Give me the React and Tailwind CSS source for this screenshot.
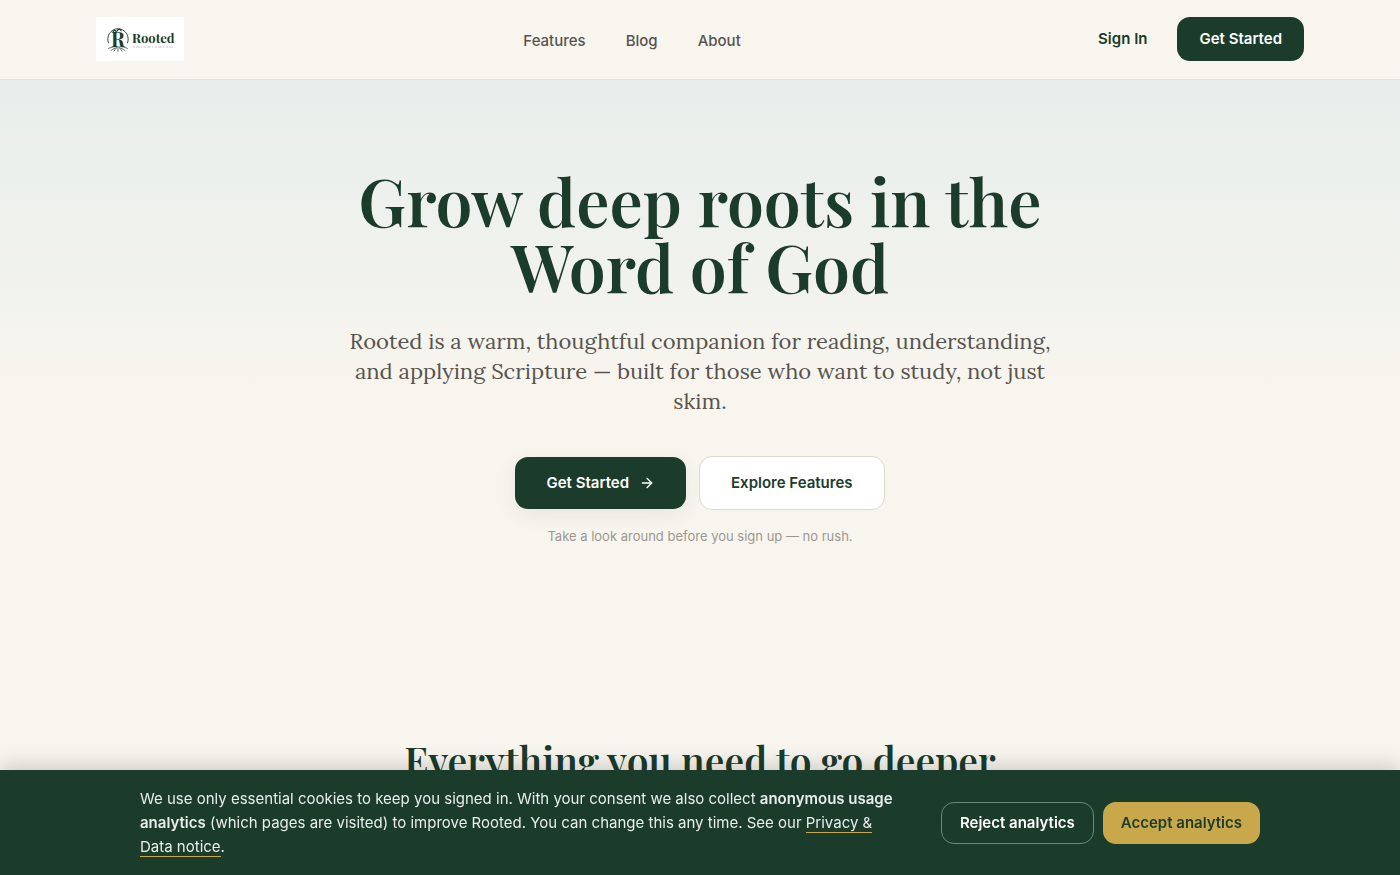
import { ArrowRight } from "lucide-react";

function Logo() {
  return (
    <a href="#home" aria-label="Rooted" className="flex h-11 w-22 items-center bg-white pl-2">
      <svg viewBox="0 0 80 44" className="h-11 w-20" aria-hidden="true">
        <g fill="none" stroke="#1b3b2b" strokeLinecap="round">
          <path d="M4.500 26A10.300 10.300 0 1 1 23.500 26" strokeWidth="0.900" />
          <path d="M14 30v4.500M13 30c-2 2-4 1.500-6 3.500M15 30c2 2 4 1.500 6 3.500M12 29.500c-3 .5-5 .5-7.500 2M16 29.500c3 .5 5 .5 7.500 2M12.500 31c-1 1-2 2-2.500 3M15.500 31c1 1 2 2 2.500 3" strokeWidth="0.700" />
          <path d="M9 15c1-2 2-2 3-.5M13 14c1-2 3-2 4-.5" strokeWidth="1.200" />
        </g>
        <text x="7" y="30" fontFamily="Playfair Display, Liberation Serif, serif" fontWeight="700" fontSize="20" fill="#1b3b2b">R</text>
        <text x="28" y="26" fontFamily="Playfair Display, Liberation Serif, serif" fontWeight="700" fontSize="13" fill="#1b3b2b">Rooted</text>
        <path d="M29 30h41" stroke="#b9b9b4" strokeWidth="0.800" strokeDasharray="2 1 4 1 1 2" />
      </svg>
    </a>
  );
}

function Header() {
  return (
    <header className="border-b border-[#e6e2da] bg-[#f8f5ee] pb-px">
      <div className="mx-auto flex h-[78px] max-w-[1208px] items-center justify-between">
        <Logo />
        <nav className="flex gap-10 pt-1 text-[15px] font-medium text-[#57534e]">
          <a href="#features">Features</a>
          <a href="#blog">Blog</a>
          <a href="#about">About</a>
        </nav>
        <div className="flex items-center gap-3 text-[15px] font-semibold">
          <a href="#sign-in" className="px-[18px] text-[#1b3b2b]">Sign In</a>
          <a href="#get-started" className="flex h-11 items-center rounded-[13px] bg-[#1b3b2b] px-[22px] text-white">
            Get Started
          </a>
        </div>
      </div>
    </header>
  );
}

function Hero() {
  return (
    <section className="bg-[linear-gradient(to_bottom,#e7eeeb_0px,#f8f5ee_320px)] px-6 pt-[87px] pb-[190px] text-center">
      <h1 className="mx-auto max-w-[760px] font-['Playfair_Display','Liberation_Serif',serif] text-[66px] leading-[66px] font-semibold text-[#1b3b2b]">
        Grow deep roots in the Word of God
      </h1>
      <p className="mx-auto mt-[27px] max-w-[712px] font-['Lora','Liberation_Serif',serif] text-[22px] leading-[30px] text-[#57534e]">
        Rooted is a warm, thoughtful companion for reading, understanding, and applying Scripture — built for those who
        want to study, not just skim.
      </p>
      <div className="mt-10 flex items-center justify-center gap-[13px] text-[15px] font-semibold">
        <a
          href="#get-started"
          className="flex h-[52px] items-center gap-[10px] rounded-[13px] bg-[#1b3b2b] px-[31px] text-white shadow-[0_6px_20px_rgba(27,59,43,0.08)]"
        >
          Get Started
          <ArrowRight className="size-4" aria-hidden="true" />
        </a>
        <a
          href="#features"
          className="flex h-[54px] items-center rounded-[13px] border border-[#dcdacb] bg-white px-[31px] text-[#1b3b2b]"
        >
          Explore Features
        </a>
      </div>
      <p className="mt-4 text-[13px] leading-5 text-[#9c9791]">Take a look around before you sign up — no rush.</p>
    </section>
  );
}

function Features() {
  return (
    <section id="features" className="px-6 pb-40 text-center">
      <h2 className="font-['Playfair_Display','Liberation_Serif',serif] text-[39px] leading-[48px] font-semibold text-[#1b3b2b]">
        Everything you need to go deeper
      </h2>
    </section>
  );
}

function CookieBanner() {
  return (
    <div
      role="region"
      aria-label="Cookie consent"
      className="fixed inset-x-0 bottom-0 border-t border-[#1b3b2b] bg-[#1b3b2b] px-6 py-4 shadow-[0_-4px_20px_rgba(0,0,0,0.18)]"
    >
      <div className="mx-auto flex max-w-[1120px] items-center justify-between gap-6">
        <p className="max-w-[764px] text-[15px] leading-[24px] text-[#e7eeeb]">
          We use only essential cookies to keep you signed in. With your consent we also collect{" "}
          <strong className="font-semibold">anonymous usage analytics</strong> (which pages are visited) to improve
          Rooted. You can change this any time. See our{" "}
          <a href="#privacy" className="border-b border-[#c9a84c]">
            Privacy &amp; Data notice
          </a>
          .
        </p>
        <div className="flex shrink-0 gap-[9px] text-[15px] font-semibold">
          <button type="button" className="h-[42px] rounded-[13px] border border-[#6b8a79] px-[18px] text-white">
            Reject analytics
          </button>
          <button type="button" className="h-[42px] rounded-[13px] bg-[#c9a84c] px-[18px] text-[#1b3b2b]">
            Accept analytics
          </button>
        </div>
      </div>
    </div>
  );
}

export default function App() {
  return (
    <div className="h-screen overflow-hidden bg-[#f8f5ee] font-['Inter',sans-serif]">
      <Header />
      <main>
        <Hero />
        <Features />
      </main>
      <CookieBanner />
    </div>
  );
}
